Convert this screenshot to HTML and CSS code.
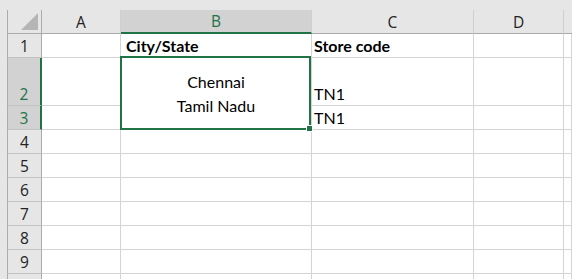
FILE: index.html
```html
<!DOCTYPE html>
<html lang="en">
<head>
    <meta charset="UTF-8">
    <title>Sheet1</title>
    <link rel="stylesheet" href="styles.css">
</head>
<body>
    <div class="sheet">
        <!-- column headers -->
        <div class="corner">
            <svg width="18" height="18" viewBox="0 0 18 18"><polygon points="17,0 17,17 0,17" fill="#b5b5b5"/></svg>
        </div>
        <div class="col-head">A</div>
        <div class="col-head selected">B</div>
        <div class="col-head">C</div>
        <div class="col-head">D</div>
        <div class="col-head last"></div>

        <!-- row 1 -->
        <div class="row-head">1</div>
        <div class="cell"></div>
        <div class="cell bold indent">City/State</div>
        <div class="cell bold">Store code</div>
        <div class="cell"></div>
        <div class="cell"></div>

        <!-- row 2 -->
        <div class="row-head selected">2</div>
        <div class="cell"></div>
        <div class="cell merged">
            <span>Chennai</span>
            <span>Tamil Nadu</span>
            <div class="selection"></div>
            <div class="handle"></div>
        </div>
        <div class="cell">TN1</div>
        <div class="cell"></div>
        <div class="cell"></div>

        <!-- row 3 -->
        <div class="row-head selected">3</div>
        <div class="cell"></div>
        <div class="cell">TN1</div>
        <div class="cell"></div>
        <div class="cell"></div>

        <div class="row-head">4</div>
        <div class="cell"></div><div class="cell"></div><div class="cell"></div><div class="cell"></div><div class="cell"></div>
        <div class="row-head">5</div>
        <div class="cell"></div><div class="cell"></div><div class="cell"></div><div class="cell"></div><div class="cell"></div>
        <div class="row-head">6</div>
        <div class="cell"></div><div class="cell"></div><div class="cell"></div><div class="cell"></div><div class="cell"></div>
        <div class="row-head">7</div>
        <div class="cell"></div><div class="cell"></div><div class="cell"></div><div class="cell"></div><div class="cell"></div>
        <div class="row-head">8</div>
        <div class="cell"></div><div class="cell"></div><div class="cell"></div><div class="cell"></div><div class="cell"></div>
        <div class="row-head">9</div>
        <div class="cell"></div><div class="cell"></div><div class="cell"></div><div class="cell"></div><div class="cell"></div>
        <div class="row-head"></div>
        <div class="cell"></div><div class="cell"></div><div class="cell"></div><div class="cell"></div><div class="cell"></div>
    </div>
</body>
</html>
```

FILE: styles.css
```css
/* Sheet layout */
html, body {
    margin: 0;
    padding: 0;
    width: 100%;
    height: 100%;
    overflow: hidden;
    background-color: #e6e6e6;
}

body {
    padding: 10px 0 0 7px;
    box-sizing: border-box;
}

.sheet {
    display: grid;
    grid-template-columns: 35px 79px 191px 162px 90px 1fr;
    grid-template-rows: 24px 24px 48px repeat(8, 24px);
    font-family: 'Lato', sans-serif;
    font-size: 16px;
}

.sheet > div {
    box-sizing: border-box;
}

.corner {
    border-left: 1px solid #ababab;
    border-right: 1px solid #ababab;
    border-bottom: 1px solid #ababab;
    display: flex;
    justify-content: flex-end;
    align-items: flex-end;
    padding: 0 2px 2px 0;
}

.corner svg {
    display: block;
}

.col-head {
    font-family: 'Open Sans', sans-serif;
    font-size: 15.5px;
    color: #222;
    border-right: 1px solid #cfcfcf;
    border-bottom: 1px solid #ababab;
    display: flex;
    align-items: center;
    justify-content: center;
}

.col-head.last {
    border-right: none;
}

.col-head.selected {
    background-color: #d2d2d2;
    color: #217346;
    border-bottom: 2px solid #217346;
}

.row-head {
    font-family: 'Open Sans', sans-serif;
    font-size: 15.5px;
    color: #222;
    background-color: #e6e6e6;
    border-left: 1px solid #ababab;
    border-right: 1px solid #ababab;
    border-bottom: 1px solid #c3c3c3;
    display: flex;
    align-items: flex-end;
    justify-content: center;
    line-height: 20px;
    padding-bottom: 1px;
}

.row-head.selected {
    background-color: #d2d2d2;
    color: #217346;
    border-right: 2px solid #217346;
}

.cell {
    background-color: #fff;
    color: #000;
    border-right: 1px solid #d4d4d4;
    border-bottom: 1px solid #d4d4d4;
    display: flex;
    align-items: flex-end;
    line-height: 19px;
    padding: 0 0 2px 2px;
    white-space: nowrap;
}

.bold {
    font-weight: bold;
}

.indent {
    padding-left: 5px;
}

.merged {
    grid-row: span 2;
    position: relative;
    flex-direction: column;
    align-items: center;
    justify-content: center;
    line-height: 24px;
    padding: 0;
}

.selection {
    position: absolute;
    top: -2px;
    left: -1px;
    right: 0;
    bottom: -1px;
    border: 2px solid #217346;
}

.handle {
    position: absolute;
    right: -2px;
    bottom: -3px;
    width: 5px;
    height: 5px;
    background-color: #217346;
    border: 1px solid #fff;
}
```
